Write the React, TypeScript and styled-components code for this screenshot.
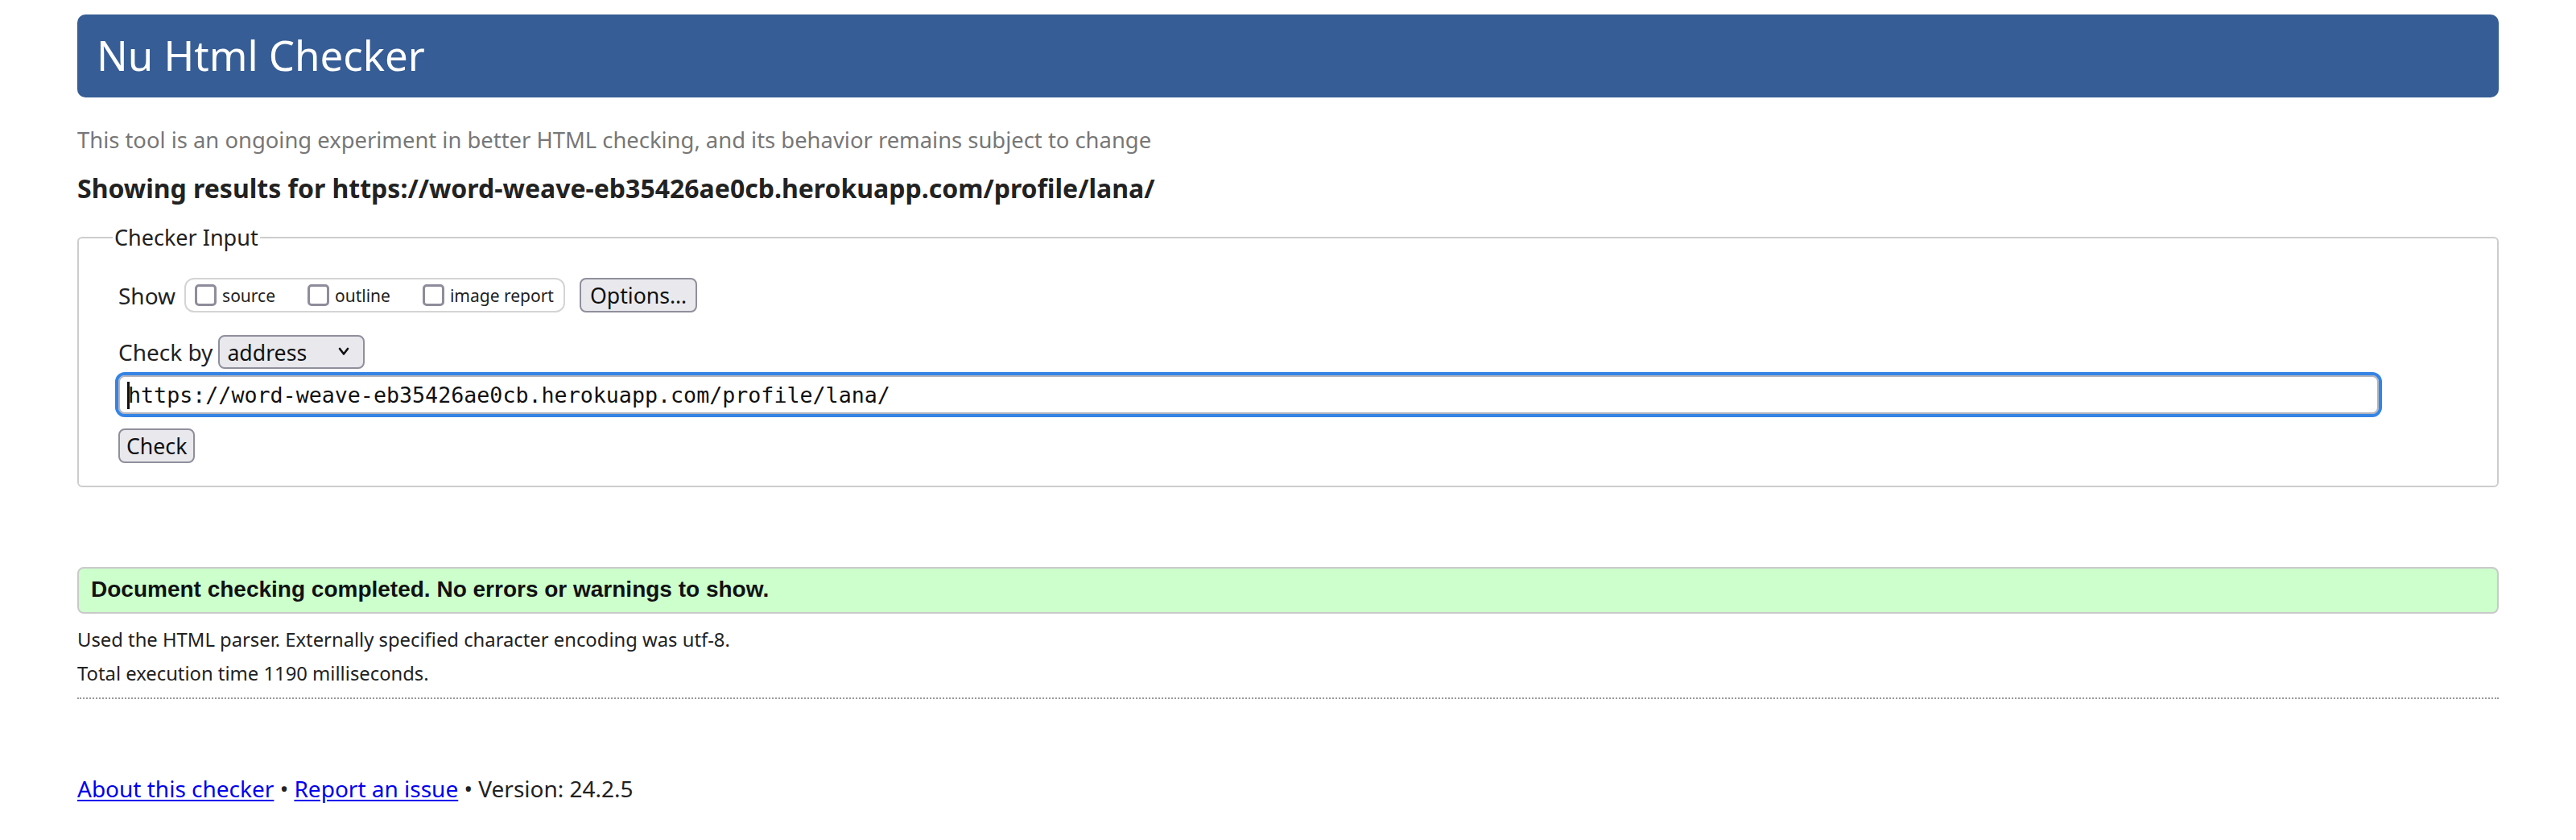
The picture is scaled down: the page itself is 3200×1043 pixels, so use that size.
import React from 'react'
import styled, { createGlobalStyle } from 'styled-components'

const GlobalStyle = createGlobalStyle`
  html, body {
    margin: 0;
    padding: 0;
    background: #fff;
  }
  * { box-sizing: border-box; }
`;

const Page = styled.div`
  padding: 18px 96px 0;
  font-family: "Noto Sans", "Open Sans", sans-serif;
  color: #222;
`;

const Title = styled.h1`
  margin: 0;
  height: 103px;
  padding: 0 24px 4px;
  display: flex;
  align-items: center;
  background: #365d95;
  border-radius: 10px;
  color: #fff;
  font-size: 51px;
  font-weight: 400;
`;

const Intro = styled.p`
  margin: 34px 0 0;
  font-size: 27.4px;
  line-height: 38px;
  color: #777;
`;

const ResultsFor = styled.h2`
  margin: 19px 0 0;
  font-size: 32px;
  line-height: 44px;
  font-weight: 700;
  color: #222;
`;

const InputBox = styled.fieldset`
  margin: 20px 0 0;
  padding: 31px 49px 28px;
  border: 2px solid #cdcdcd;
  border-radius: 6px;
  min-width: 0;
`;

const Legend = styled.legend`
  margin-left: -7px;
  padding: 0 2px;
  font-size: 27px;
  line-height: 38px;
  color: #222;
`;

const Row = styled.div<{ $gap?: number; $top?: number; $height?: number }>`
  display: flex;
  align-items: center;
  gap: ${p => p.$gap ?? 0}px;
  margin-top: ${p => p.$top ?? 0}px;
  height: ${p => p.$height ?? 43}px;
`;

const RowLabel = styled.span`
  font-size: 28px;
  color: #222;
`;

const Options = styled.div`
  display: flex;
  align-items: center;
  gap: 40px;
  height: 43px;
  padding: 0 12px 0 11px;
  border: 2px solid #d4d4d4;
  border-radius: 12px;
`;

const OptionItem = styled.label`
  display: flex;
  align-items: center;
  gap: 7px;
  font-size: 21px;
  color: #222;
`;

const Box = styled.input`
  appearance: none;
  margin: 0;
  width: 27px;
  height: 27px;
  border: 3px solid #8f8c9b;
  border-radius: 5px;
  background: #fff;
`;

const Button = styled.button<{ $pad?: number }>`
  height: 43px;
  padding: 0 ${p => p.$pad ?? 11}px;
  font-family: "Noto Sans", sans-serif;
  font-size: 26.67px;
  color: #111;
  background: #e9e9ed;
  border: 2px solid #8f8f9d;
  border-radius: 8px;
`;

const SelectWrap = styled.div`
  position: relative;
  width: 182px;
  height: 42px;
`;

const Select = styled.select`
  appearance: none;
  width: 100%;
  height: 100%;
  padding: 0 0 0 9px;
  font-family: "Noto Sans", sans-serif;
  font-size: 26.67px;
  color: #111;
  background: #e9e9ed;
  border: 2px solid #8f8f9d;
  border-radius: 8px;
`;

const Chevron = styled.svg`
  position: absolute;
  right: 19px;
  top: 15px;
  pointer-events: none;
`;

const UrlWrap = styled.div`
  position: relative;
  margin-top: 8px;
  width: calc(100% - 98px);
  height: 48px;
`;

const UrlInput = styled.input`
  width: 100%;
  height: 100%;
  padding: 0 10px;
  font-family: "DejaVu Sans Mono", "Liberation Mono", monospace;
  font-size: 26.67px;
  color: #111;
  background: #fff;
  border: 2px solid #b4b4bc;
  border-radius: 8px;
  outline: 4px solid #3584e4;
  outline-offset: 0;
`;

const Caret = styled.span`
  position: absolute;
  left: 11px;
  top: 8px;
  width: 3px;
  height: 34px;
  background: #111;
`;

const CheckRow = styled.div`
  margin-top: 18px;
`;

const Success = styled.p`
  margin: 99px 0 0;
  height: 58px;
  display: flex;
  align-items: center;
  padding: 0 15px 2px;
  background: #ccffcc;
  border: 2px solid #cacaca;
  border-radius: 8px;
  font-family: "Liberation Sans", Arial, sans-serif;
  font-size: 28px;
  font-weight: 700;
  color: #111;
`;

const Detail = styled.p<{ $top: number }>`
  margin: ${p => p.$top}px 0 0;
  font-size: 23.8px;
  line-height: 30px;
  color: #222;
`;

const Rule = styled.hr`
  margin: 15px 0 0;
  border: 0;
  border-top: 2px dotted #999;
  height: 0;
`;

const Footer = styled.p`
  margin: 92px 0 0;
  font-size: 28px;
  color: #222;
`;

const FootLink = styled.a`
  color: #0000ee;
  text-decoration: underline;
  text-underline-offset: 3px;
`;

export default function App() {
  const url = 'https://word-weave-eb35426ae0cb.herokuapp.com/profile/lana/'
  return (
    <>
      <GlobalStyle />
      <Page>
        <Title>Nu Html Checker</Title>
        <Intro>This tool is an ongoing experiment in better HTML checking, and its behavior remains subject to change</Intro>
        <ResultsFor>Showing results for {url}</ResultsFor>

        <InputBox>
          <Legend>Checker Input</Legend>
          <Row $gap={11}>
            <RowLabel>Show</RowLabel>
            <Options>
              <OptionItem><Box type="checkbox" />source</OptionItem>
              <OptionItem><Box type="checkbox" />outline</OptionItem>
              <OptionItem><Box type="checkbox" />image report</OptionItem>
            </Options>
            <Button style={{ marginLeft: 7 }}>Options…</Button>
          </Row>
          <Row $gap={7} $top={28} $height={42}>
            <RowLabel>Check by</RowLabel>
            <SelectWrap>
              <Select defaultValue="address">
                <option value="address">address</option>
                <option value="file">file upload</option>
                <option value="text">text input</option>
              </Select>
              <Chevron width="14" height="11" viewBox="0 0 14 11">
                <polyline points="2,2 7,8.5 12,2" fill="none" stroke="#111" strokeWidth="2.6" strokeLinejoin="round" strokeLinecap="round" />
              </Chevron>
            </SelectWrap>
          </Row>
          <UrlWrap>
            <UrlInput type="url" defaultValue={url} spellCheck={false} />
            <Caret />
          </UrlWrap>
          <CheckRow>
            <Button $pad={8}>Check</Button>
          </CheckRow>
        </InputBox>

        <Success>Document checking completed. No errors or warnings to show.</Success>
        <Detail $top={17}>Used the HTML parser. Externally specified character encoding was utf-8.</Detail>
        <Detail $top={12}>Total execution time 1190 milliseconds.</Detail>
        <Rule />

        <Footer>
          <FootLink href="#about">About this checker</FootLink> • <FootLink href="#issue">Report an issue</FootLink> • Version: 24.2.5
        </Footer>
      </Page>
    </>
  )
}
